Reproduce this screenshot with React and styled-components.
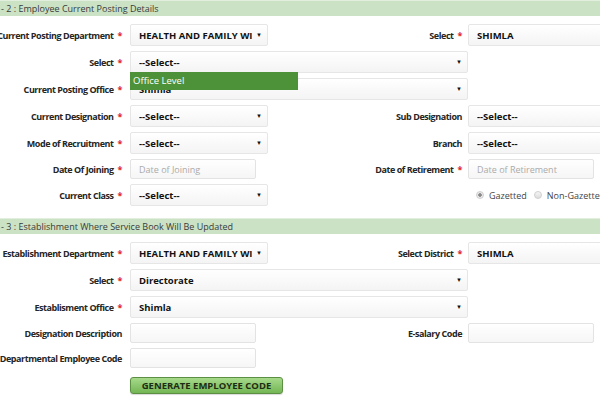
import React from 'react';
import styled, { createGlobalStyle } from 'styled-components';

const Global = createGlobalStyle`
  html, body {
    margin: 0;
    padding: 0;
    background: #ffffff;
    overflow: hidden;
  }
  body {
    width: 600px;
    height: 400px;
    font-family: "Open Sans", "Noto Sans", sans-serif;
    color: #333;
  }
`;

const Page = styled.div`
  width: 600px;
  height: 400px;
  overflow: hidden;
  position: relative;
`;

const SectionBar = styled.div`
  height: 16px;
  margin-top: ${p => p.$top || 0}px;
  background: #cbe2c5;
  border-top: 1px solid #e2efde;
  box-sizing: border-box;
  font-size: 9px;
  line-height: 15px;
  padding-left: 1px;
  color: #3a3a3a;
  white-space: nowrap;
`;

const Rows = styled.div`
  display: grid;
  grid-template-columns: 130px 138px 200px 140px;
  row-gap: 5px;
  padding-top: 8px;
  align-items: center;
`;

const Label = styled.div`
  display: flex;
  justify-content: flex-end;
  align-items: center;
  padding-right: ${p => p.$pr || 8}px;
  font-size: 9px;
  font-weight: 700;
  letter-spacing: -0.45px;
  color: #262626;
  white-space: nowrap;
  grid-column: ${p => p.$col || 'auto'};
  height: 100%;
`;

const Star = styled.span`
  color: #e0262b;
  margin-left: 4px;
`;

const FieldCell = styled.div`
  grid-column: ${p => p.$span || 'auto'};
  position: relative;
  display: flex;
  align-items: center;
  height: ${p => p.$h || 22}px;
`;

const SelectBox = styled.div`
  box-sizing: border-box;
  width: ${p => p.$w}px;
  height: 22px;
  flex: none;
  border: 1px solid #e6e6e6;
  border-radius: 2px;
  background: linear-gradient(#ffffff, #f4f4f4);
  display: flex;
  align-items: center;
  padding: 0 5px 0 8px;
  font-size: 9.5px;
  font-weight: 700;
  color: #111;
  white-space: nowrap;
  overflow: hidden;
`;

const SelectText = styled.span`
  flex: 1;
  overflow: hidden;
`;

const Arrow = styled.span`
  font-size: 6px;
  color: #111;
  margin-left: 4px;
`;

const TextInput = styled.div`
  box-sizing: border-box;
  width: 126px;
  height: 20px;
  border: 1px solid #e3e3e3;
  border-radius: 2px;
  background: linear-gradient(#ffffff, #f6f6f6);
  display: flex;
  align-items: center;
  padding-left: 8px;
  font-size: 9px;
  color: #aaa;
  white-space: nowrap;
`;

const Menu = styled.div`
  position: absolute;
  left: 0;
  top: 21px;
  width: 168px;
  height: 18px;
  background: #4d9139;
  color: #fff;
  font-size: 9.5px;
  line-height: 18px;
  padding-left: 3px;
  box-sizing: border-box;
  z-index: 2;
`;

const Radios = styled.div`
  grid-column: 4;
  display: flex;
  align-items: center;
  gap: 5px;
  padding-left: 8px;
  font-size: 9px;
  color: #444;
  white-space: nowrap;
  height: 22px;
`;

const Radio = styled.span`
  width: 8px;
  height: 8px;
  border-radius: 50%;
  box-sizing: border-box;
  border: 1px solid #d0d0d0;
  background: ${p => (p.$on ? 'radial-gradient(circle, #8a8a8a 0 1.5px, #e8e8e8 2px)' : 'linear-gradient(#f6f6f6, #dcdcdc)')};
  margin-left: ${p => p.$gap || 0}px;
`;

const Button = styled.button`
  box-sizing: border-box;
  width: 153px;
  height: 17px;
  border: 1px solid #5b8f42;
  border-radius: 3px;
  background: linear-gradient(#a6d98a, #74b655);
  font-family: inherit;
  font-size: 9.5px;
  font-weight: 700;
  color: #1d2c14;
  padding: 0;
  white-space: nowrap;
  box-shadow: 0 1px 1px rgba(0, 0, 0, 0.15);
`;

const Req = ({ children, col, pr }) => (
  <Label $col={col} $pr={pr}>
    {children}
    <Star>*</Star>
  </Label>
);

const Select = ({ w, value }) => (
  <SelectBox $w={w}>
    <SelectText>{value}</SelectText>
    <Arrow>▼</Arrow>
  </SelectBox>
);

export default function App() {
  return (
    <Page>
      <Global />
      <SectionBar>- 2 : Employee Current Posting Details</SectionBar>
      <Rows>
        <Req>Current Posting Department</Req>
        <FieldCell><Select w={138} value="HEALTH AND FAMILY WI" /></FieldCell>
        <Req pr={6}>Select</Req>
        <FieldCell><Select w={160} value="SHIMLA" /></FieldCell>

        <Req>Select</Req>
        <FieldCell $span="2 / span 2">
          <Select w={338} value="--Select--" />
          <Menu>Office Level</Menu>
        </FieldCell>
        <div />

        <Req>Current Posting Office</Req>
        <FieldCell $span="2 / span 2"><Select w={338} value="Shimla" /></FieldCell>
        <div />

        <Req>Current Designation</Req>
        <FieldCell><Select w={138} value="--Select--" /></FieldCell>
        <Label $pr={6}>Sub Designation</Label>
        <FieldCell><Select w={160} value="--Select--" /></FieldCell>

        <Req>Mode of Recruitment</Req>
        <FieldCell><Select w={138} value="--Select--" /></FieldCell>
        <Label $pr={6}>Branch</Label>
        <FieldCell><Select w={160} value="--Select--" /></FieldCell>

        <Req>Date Of Joining</Req>
        <FieldCell $h={20}><TextInput>Date of Joining</TextInput></FieldCell>
        <Req pr={6}>Date of Retirement</Req>
        <FieldCell $h={20}><TextInput>Date of Retirement</TextInput></FieldCell>

        <Req>Current Class</Req>
        <FieldCell><Select w={138} value="--Select--" /></FieldCell>
        <div />
        <Radios>
          <Radio $on />
          Gazetted
          <Radio $gap={2} />
          Non-Gazetted
        </Radios>
      </Rows>

      <SectionBar $top={12}>- 3 : Establishment Where Service Book Will Be Updated</SectionBar>
      <Rows>
        <Req>Establishment Department</Req>
        <FieldCell><Select w={138} value="HEALTH AND FAMILY WI" /></FieldCell>
        <Req pr={6}>Select District</Req>
        <FieldCell><Select w={160} value="SHIMLA" /></FieldCell>

        <Req>Select</Req>
        <FieldCell $span="2 / span 2"><Select w={338} value="Directorate" /></FieldCell>
        <div />

        <Req>Establisment Office</Req>
        <FieldCell $span="2 / span 2"><Select w={338} value="Shimla" /></FieldCell>
        <div />

        <Label>Designation Description</Label>
        <FieldCell $h={20}><TextInput /></FieldCell>
        <Label $pr={6}>E-salary Code</Label>
        <FieldCell $h={20}><TextInput /></FieldCell>

        <Label>Departmental Employee Code</Label>
        <FieldCell $h={20}><TextInput /></FieldCell>
        <div />
        <div />

        <div />
        <FieldCell $span="2 / span 2" $h={24}><Button>GENERATE EMPLOYEE CODE</Button></FieldCell>
      </Rows>
    </Page>
  );
}
